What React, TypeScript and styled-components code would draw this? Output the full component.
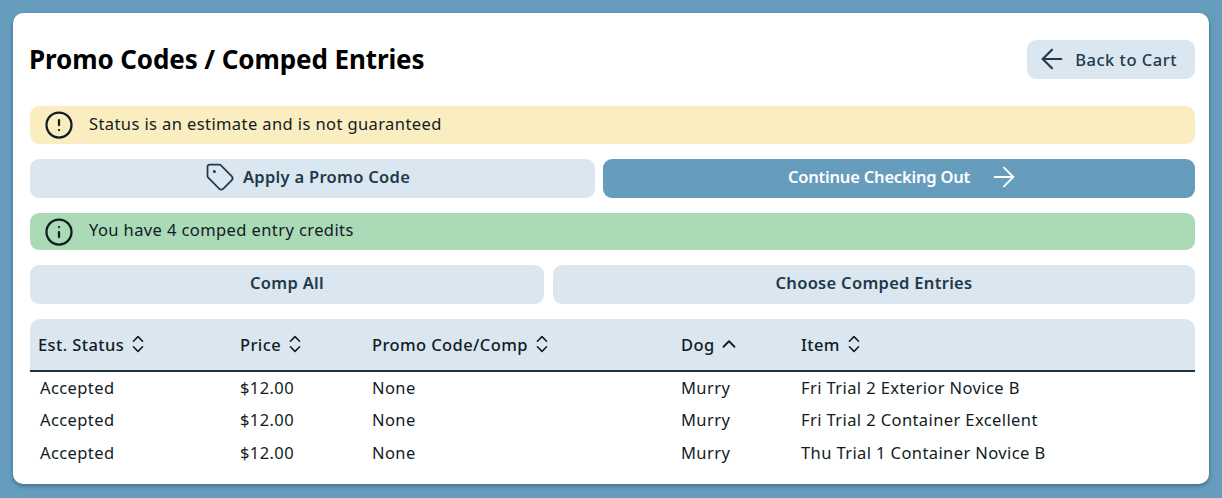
import styled, { createGlobalStyle } from 'styled-components'
import { ArrowLeft, ArrowRight, ChevronUp, ChevronsUpDown, CircleAlert, Info, Tag } from 'lucide-react'

const GlobalStyle = createGlobalStyle`
  html, body {
    margin: 0;
    padding: 0;
    background: #669dbd;
    font-family: "Noto Sans", "Open Sans", sans-serif;
    color: #111c24;
  }
`

const Page = styled.div`
  box-sizing: border-box;
  width: 1222px;
  height: 498px;
  padding: 13px;
`

const Card = styled.main`
  box-sizing: border-box;
  height: 471px;
  padding: 27px 14px 0 17px;
  background: #fff;
  border-radius: 10px;
  box-shadow: 0 2px 4px rgba(20, 50, 70, 0.45);
  display: flex;
  flex-direction: column;
  gap: 15px;
`

const Header = styled.header`
  display: flex;
  align-items: center;
  justify-content: space-between;
  height: 39px;
  margin-bottom: 12px;
`

const Title = styled.h1`
  margin: 0 0 1px -1px;
  font-size: 26px;
  font-weight: 700;
  color: #000;
  letter-spacing: -0.1px;
`

const Button = styled.button<{ $primary?: boolean }>`
  height: 39px;
  padding: 0 0 4px;
  border: 0;
  border-radius: 9px;
  background: ${(p) => (p.$primary ? '#669dbd' : '#dbe7f0')};
  color: ${(p) => (p.$primary ? '#fff' : '#21394a')};
  font-family: inherit;
  font-size: 16.5px;
  font-weight: 600;
  letter-spacing: ${(p) => (p.$primary ? '-0.2px' : '0.3px')};
  display: flex;
  align-items: center;
  justify-content: center;
  gap: 8px;
`

const BackButton = styled(Button)`
  padding: 0 18px 1px 9px;
  gap: 7px;
  font-weight: 500;
  letter-spacing: 0.5px;
`

const TagIcon = styled(Tag)`
  margin-left: -10px;
`

const NextIcon = styled(ArrowRight)`
  margin: 1px -10px 0 10px;
`

const Row = styled.div<{ $columns: string; $gap: number }>`
  display: grid;
  grid-template-columns: ${(p) => p.$columns};
  gap: ${(p) => p.$gap}px;
`

const Alert = styled.div<{ $tone: 'warning' | 'success' }>`
  height: ${(p) => (p.$tone === 'warning' ? 38 : 37)}px;
  padding: 0 14px;
  border-radius: 9px;
  background: ${(p) => (p.$tone === 'warning' ? '#faedc0' : '#aadab6')};
  color: #111c24;
  font-size: 16.5px;
  letter-spacing: 0.4px;
  display: flex;
  align-items: center;
  gap: 15px;
`

const AlertText = styled.span`
  margin-top: -4px;
`

const Table = styled.table`
  width: 100%;
  table-layout: fixed;
  border-collapse: collapse;
  font-size: 16.5px;
  letter-spacing: 0.4px;
`

const Head = styled.thead`
  background: #dbe7f0;
  border-bottom: 2px solid #1f3442;
`

const HeadCell = styled.th<{ $width: number }>`
  box-sizing: border-box;
  width: ${(p) => p.$width}px;
  height: 52px;
  padding: 0 0 1px 8px;
  font-weight: 500;
  text-align: left;
  color: #111c24;

  &:first-child { border-top-left-radius: 10px; }
  &:last-child { border-top-right-radius: 10px; }
`

const HeadLabel = styled.span`
  display: inline-flex;
  align-items: center;
  gap: 3px;
`

const Cell = styled.td`
  box-sizing: border-box;
  height: 32.5px;
  padding: 0 0 0 8px;
  color: #111c24;

  &:first-child { padding-left: 10px; }
`

const columns = [
  { label: 'Est. Status', width: 202 },
  { label: 'Price', width: 132 },
  { label: 'Promo Code/Comp', width: 309 },
  { label: 'Dog', width: 120, sorted: true },
  { label: 'Item', width: 402 },
]

const rows = [
  'Fri Trial 2 Exterior Novice B',
  'Fri Trial 2 Container Excellent',
  'Thu Trial 1 Container Novice B',
]

const App = () => (
  <>
    <GlobalStyle />
    <Page>
      <Card>
        <Header>
          <Title>Promo Codes / Comped Entries</Title>
          <BackButton>
            <ArrowLeft size={32} strokeWidth={1.6} />
            Back to Cart
          </BackButton>
        </Header>
        <Alert $tone="warning">
          <CircleAlert size={30} strokeWidth={1.8} />
          <AlertText>Status is an estimate and is not guaranteed</AlertText>
        </Alert>
        <Row $columns="565px 592px" $gap={8}>
          <Button>
            <TagIcon size={30} strokeWidth={1.4} />
            Apply a Promo Code
          </Button>
          <Button $primary>
            Continue Checking Out
            <NextIcon size={32} strokeWidth={1.4} />
          </Button>
        </Row>
        <Alert $tone="success">
          <Info size={30} strokeWidth={1.8} />
          <AlertText>You have 4 comped entry credits</AlertText>
        </Alert>
        <Row $columns="514px 642px" $gap={9}>
          <Button>Comp All</Button>
          <Button>Choose Comped Entries</Button>
        </Row>
        <Table>
          <Head>
            <tr>
              {columns.map((col) => (
                <HeadCell key={col.label} $width={col.width}>
                  <HeadLabel>
                    {col.label}
                    {col.sorted ? <ChevronUp size={22} strokeWidth={2} /> : <ChevronsUpDown size={22} strokeWidth={1.7} />}
                  </HeadLabel>
                </HeadCell>
              ))}
            </tr>
          </Head>
          <tbody>
            {rows.map((item) => (
              <tr key={item}>
                <Cell>Accepted</Cell>
                <Cell>$12.00</Cell>
                <Cell>None</Cell>
                <Cell>Murry</Cell>
                <Cell>{item}</Cell>
              </tr>
            ))}
          </tbody>
        </Table>
      </Card>
    </Page>
  </>
)

export default App
